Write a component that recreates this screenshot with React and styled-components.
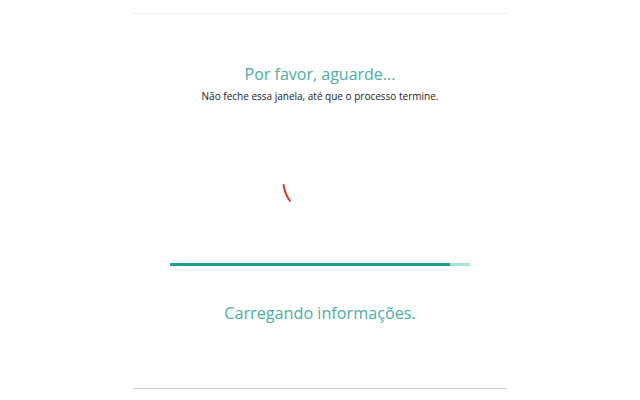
import React from "react";
import styled, { createGlobalStyle } from "styled-components";

const Global = createGlobalStyle`
  html, body { margin: 0; padding: 0; background: #fff; }
  body { font-family: "Open Sans", "Noto Sans", sans-serif; }
`;

const Panel = styled.div`
  width: 374px;
  margin: 13px auto 0;
  border-top: 1px solid #eeeeee;
  border-bottom: 1px solid #cccccc;
  display: flex;
  flex-direction: column;
  align-items: center;
  height: 376px;
  box-sizing: border-box;
`;

const Title = styled.h1`
  margin: 49px 0 0;
  font-size: 16px;
  font-weight: 400;
  line-height: 22px;
  color: #4aafa1;
`;

const Subtitle = styled.p`
  margin: 4px 0 0;
  font-size: 10px;
  line-height: 14px;
  color: #222;
`;

const SpinnerBox = styled.div`
  width: 300px;
  height: 24px;
  margin-top: 79px;
  display: flex;
`;

const Progress = styled.div`
  width: 300px;
  height: 3px;
  margin-top: 57px;
  background: #a3e6de;
  display: flex;
`;

const Fill = styled.div`
  height: 100%;
  background: #1f9d8b;
`;

const Loading = styled.p`
  margin: 36px 0 0;
  font-size: 16.2px;
  line-height: 22px;
  color: #4aafa1;
`;

export default function App() {
  const pct = 93.3;
  return (
    <>
      <Global />
      <Panel>
        <Title>Por favor, aguarde...</Title>
        <Subtitle>Não feche essa janela, até que o processo termine.</Subtitle>
        <SpinnerBox>
          <svg width="300" height="24" viewBox="0 0 300 24">
            <path d="M113.5 3 Q115 12 120 19" fill="none" stroke="#d93a3a" strokeWidth="2" strokeLinecap="round" />
          </svg>
        </SpinnerBox>
        <Progress>
          <Fill style={{ width: `${pct}%` }} />
        </Progress>
        <Loading>Carregando informações.</Loading>
      </Panel>
    </>
  );
}
